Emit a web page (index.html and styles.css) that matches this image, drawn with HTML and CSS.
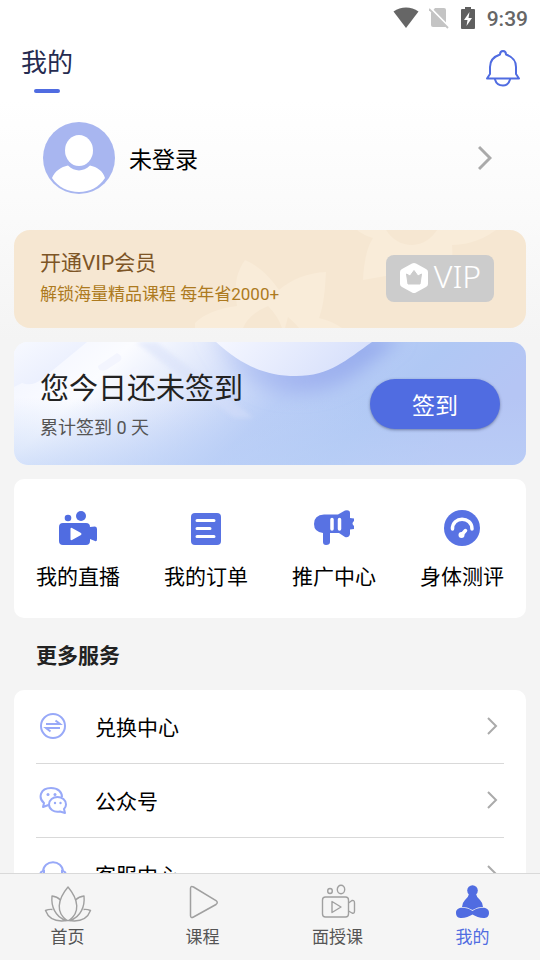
FILE: index.html
```html
<!DOCTYPE html>
<html lang="zh-CN">
<head>
<meta charset="utf-8">
<meta name="viewport" content="width=device-width, initial-scale=1">
<title>我的</title>
<link rel="stylesheet" href="styles.css">
</head>
<body>
<main class="screen">
  <div class="status">
    <svg width="26" height="22" viewBox="0 0 26 22" aria-hidden="true"><path d="M0.500 4.500C8-1 18-1 25.500 4.500L13 21Z" fill="#666"/></svg>
    <svg width="20" height="22" viewBox="0 0 20 22" aria-hidden="true"><path d="M6 1H15Q17 1 17 3V19Q17 20 16 20H4Q2 20 2 18V6Z" fill="#c4c4c4"/><path d="M1 .5L20 20" stroke="#fff" stroke-width="2"/><path d="M0 2L19 21" stroke="#c4c4c4" stroke-width="1.800"/></svg>
    <svg width="14" height="22" viewBox="0 0 14 22" aria-hidden="true"><path d="M4 0H10V2H13Q14 2 14 3V21Q14 22 13 22H1Q0 22 0 21V3Q0 2 1 2H4Z" fill="#5f5f5f"/><path d="M8.500 5L3 13H6.500L5.500 19L11 11H7.500Z" fill="#fff"/></svg>
    <span class="clock">9:39</span>
  </div>

  <header class="header">
    <h1 class="title">我的</h1>
    <button class="bell" aria-label="消息">
      <svg width="34" height="37" viewBox="0 0 34 37" fill="none" stroke="#506ce1" stroke-width="2" stroke-linejoin="round" stroke-linecap="round"><path d="M14 4.500C14 2 15.500 1 17 1C18.500 1 20 2 20 4.500C26 6.500 30 10.500 30 17V24L33 28.500H1L4 24V17C4 10.500 8 6.500 14 4.500Z"/><path d="M9 29.500C10 33 13 35.500 17 35.500C21 35.500 23 33 24 29.500"/></svg>
    </button>
  </header>

  <a class="profile" href="#login">
    <svg width="72" height="72" viewBox="0 0 72 72" aria-hidden="true"><circle cx="36" cy="36" r="36" fill="#a8b6f0"/><path d="M9 56C12 49 18 45 25 43.500C32 50 40 50 47 43.500C54 45 60 49 62 56C56 65 47 70 36 70C25 70 15 65 9 56Z" fill="#fff"/><ellipse cx="36" cy="28.500" rx="14" ry="15.500" fill="#fff"/></svg>
    <span class="name">未登录</span>
    <svg width="14" height="26" viewBox="0 0 14 26" fill="none" stroke="#aaa" stroke-width="3" aria-hidden="true"><path d="M1 2L12 13L1 24"/></svg>
  </a>

  <a class="card vip" href="#vip">
    <svg class="art" viewBox="0 0 512 98" preserveAspectRatio="xMidYMid slice" aria-hidden="true">
      <g fill="#f9ecd9"><path d="M181 93C190 84 205 78 223 76C220 55 222 43 231 30C245 36 256 47 265 60C278 49 293 43 312 42C311 59 310 75 305 88Q318 91 328 98H181Z"/><path d="M343 0H482C466 12 449 15 438 15Q440 34 431 56L372 46L349 50C350 31 353 17 359 8Q349 5 343 0Z"/></g>
      <path d="M229 98Q235 84 254 76Q264 86 268 98Z M271 98L274 87Q281 93 285 98Z M372 0Q382 15 398 15Q414 14 423 0Z" fill="#f6e7d2"/>
    </svg>
    <span class="copy">
      <strong class="vip-title">开通VIP会员</strong>
      <span class="vip-sub">解锁海量精品课程 每年省2000+</span>
    </span>
    <span class="badge">
      <svg width="30" height="32" viewBox="0 0 30 32" aria-hidden="true"><path d="M13 1.500Q15 .5 17 1.500L27 7Q29 8 29 10V22Q29 24 27 25L17 30.500Q15 31.500 13 30.500L3 25Q1 24 1 22V10Q1 8 3 7Z" fill="#fff"/><path d="M7.500 12L11 14L15 8.500L19 14L22.500 12L21 22H9Z" fill="#ccc" stroke="#ccc" stroke-linejoin="round"/></svg>
      <span>VIP</span>
    </span>
  </a>

  <section class="card check">
    <svg class="art" viewBox="0 0 512 123" preserveAspectRatio="xMidYMid slice" aria-hidden="true">
      <defs>
        <linearGradient id="base" x1="0" y1="0" x2="1" y2=".25"><stop offset="0" stop-color="#f1f4ff"/><stop offset=".22" stop-color="#fbfcff"/><stop offset=".4" stop-color="#dfe7fb"/><stop offset=".6" stop-color="#b9cdf6"/><stop offset=".8" stop-color="#b0c8f4"/><stop offset="1" stop-color="#b5c5f4"/></linearGradient>
        <linearGradient id="low" x1="0" y1="0" x2="0" y2="1"><stop offset=".45" stop-color="#bcd1f7" stop-opacity="0"/><stop offset="1" stop-color="#bcd1f7" stop-opacity=".6"/></linearGradient>
        <linearGradient id="blob" x1="0" y1="0" x2="1" y2="1"><stop offset="0" stop-color="#f7f9ff"/><stop offset="1" stop-color="#e4eafd"/></linearGradient>
        <linearGradient id="disc" x1="0" y1="0" x2="1" y2=".2"><stop offset="0" stop-color="#f5f7ff"/><stop offset="1" stop-color="#d7e0fb"/></linearGradient>
        <linearGradient id="fade" x1="0" y1="0" x2="1" y2="0"><stop offset="0" stop-color="#9fb2ef" stop-opacity=".1"/><stop offset=".5" stop-color="#a3b5f0"/><stop offset="1" stop-color="#92a9ec"/></linearGradient>
        <filter id="soft" x="-30%" y="-50%" width="160%" height="200%"><feGaussianBlur stdDeviation="9"/></filter>
        <filter id="edge"><feGaussianBlur stdDeviation="2"/></filter>
      </defs>
      <path d="M0 0H512V123H0Z" fill="url(#base)"/>
      <path d="M0 0H512V123H0Z" fill="url(#low)"/>
      <path d="M190-12C215 35 245 52 285 51C330 50 350 25 388-5Z" fill="url(#fade)" filter="url(#soft)"/>
      <path d="M122 0H142L240 76H220Z" fill="#d6dff9" opacity=".5" filter="url(#edge)"/>
      <path d="M84 24L103 11Q110 14 106 19L92 28Q84 30 84 24Z M104 40L119 25Q128 25 122 34L107 46Z" fill="#f3f5fe"/>
      <path d="M0 0H73L28 37Q18 45 8 41L0 45Z" fill="url(#blob)"/>
      <path d="M202 0C226 22 250 34 282 34C316 34 332 18 358 0Z" fill="url(#disc)"/>
    </svg>
    <div class="copy">
      <h2 class="check-title">您今日还未签到</h2>
      <p class="check-sub">累计签到 0 天</p>
    </div>
    <button class="check-btn">签到</button>
  </section>

  <nav class="card shortcuts" aria-label="快捷入口">
    <a href="#live"><svg width="40" height="40" viewBox="0 0 40 40" fill="#506ce1" aria-hidden="true"><circle cx="10" cy="10" r="3.300"/><circle cx="23" cy="8" r="5"/><path fill-rule="evenodd" d="M5 15H28Q32 15 32 19L37 18.500Q39 18.500 39 21V31Q39 34 37 33L32 31V33Q32 37 28 37H5Q1 37 1 33V19Q1 15 5 15ZM12.500 20.500V31.500Q13 32.500 14 32L23 27Q24 26 23 25L14 20Q13 19.500 12.500 20.500Z"/></svg>我的直播</a>
    <a href="#orders"><svg width="40" height="40" viewBox="0 0 40 40" aria-hidden="true"><rect x="5" y="5" width="30" height="32" rx="4" fill="#5872e3"/><path d="M11 12.500H28M11 20.500H24M11 28.500H28" stroke="#fff" stroke-width="3" stroke-linecap="round"/></svg>我的订单</a>
    <a href="#promo"><svg width="40" height="40" viewBox="0 0 40 40" fill="#5872e3" aria-hidden="true"><path d="M10 6.500H24L31 2.500Q36 1.500 36 5V10L40 10.500V13Q37 15.500 40 18V21L36 21.500V26Q35 30 31 29L25 25H16V34Q16 37 12 37Q9 37 9 34V25Q0 24 0 16Q0 7 10 6.500Z"/><path d="M18 11.500V21M25.500 11.500V21" stroke="#fff" stroke-width="3.500" stroke-linecap="round"/></svg>推广中心</a>
    <a href="#body"><svg width="40" height="40" viewBox="0 0 40 40" aria-hidden="true"><circle cx="20" cy="20" r="18" fill="#5872e3"/><path d="M10.500 21C10 8 30 8 30 21" fill="none" stroke="#fff" stroke-width="3.500" stroke-linecap="round"/><path d="M19.500 27L23.500 22.500" stroke="#fff" stroke-width="3.500" stroke-linecap="round"/><circle cx="19.500" cy="27" r="3" fill="#fff"/></svg>身体测评</a>
  </nav>

  <h2 class="section-title">更多服务</h2>

  <ul class="card list">
    <li><a href="#exchange"><svg width="28" height="28" viewBox="0 0 28 28" fill="none" stroke="#98a9f8" stroke-width="2" aria-hidden="true"><circle cx="14" cy="14" r="12"/><path d="M7 12H21L16.500 8.500M21 16H7L11.500 19.500"/></svg><span>兑换中心</span><svg width="12" height="18" viewBox="0 0 12 18" fill="none" stroke="#aaa" stroke-width="2" aria-hidden="true"><path d="M2 1L10 9L2 17"/></svg></a></li>
    <li><a href="#official"><svg width="28" height="28" viewBox="0 0 28 28" fill="none" stroke="#98a9f8" stroke-width="2" stroke-linejoin="round" aria-hidden="true"><path d="M9.500 19L4 21L5 17C-1 12 1 2 12 2C19 2 23 6 23 11"/><path d="M25 23L26 27L21 25.500C15 27 10 23 10 18.500C10 14 14 11 18.500 11C23 11 27 14 27 18.500Q27 21 25 23Z"/><g fill="#98a9f8" stroke="none"><circle cx="9" cy="8.500" r="1.500"/><circle cx="16" cy="8.500" r="1.500"/><circle cx="16" cy="17" r="1.200"/><circle cx="21.500" cy="17" r="1.200"/></g></svg><span>公众号</span><svg width="12" height="18" viewBox="0 0 12 18" fill="none" stroke="#aaa" stroke-width="2" aria-hidden="true"><path d="M2 1L10 9L2 17"/></svg></a></li>
    <li><a href="#support"><svg width="28" height="28" viewBox="0 0 28 28" fill="none" stroke="#98a9f8" stroke-width="2" aria-hidden="true"><path d="M4 12C4 -1 24 -1 24 12M5 11Q1 11 1 16Q1 21 5 21ZM23 11Q27 11 27 16Q27 21 23 21ZM23 21Q21 26 15 26"/></svg><span>客服中心</span><svg width="12" height="18" viewBox="0 0 12 18" fill="none" stroke="#aaa" stroke-width="2" aria-hidden="true"><path d="M2 1L10 9L2 17"/></svg></a></li>
  </ul>
</main>

<nav class="tabs" aria-label="主导航">
  <a href="#home"><svg width="48" height="38" viewBox="0 0 48 38" fill="none" stroke="#a0a0a0" stroke-width="1.400" stroke-linejoin="round" aria-hidden="true"><path d="M24 3C13 16 12 29 23 36.500H25C36 29 35 16 24 3Z"/><path d="M16.500 16Q13 12.500 8 12C7 22 11 33 22 36.500M31.500 16Q35 12.500 40 12C41 22 37 33 26 36.500"/><path d="M8.500 25.500Q5 25 1.500 26.500C5 36 13 38 23 36.500M39.500 25.500Q43 25 46.500 26.500C43 36 35 38 25 36.500"/></svg>首页</a>
  <a href="#course"><svg width="48" height="38" viewBox="0 0 48 38" fill="none" stroke="#a0a0a0" stroke-width="1.500" aria-hidden="true"><path d="M11.500 4.500Q11.500 1.500 14.500 3L37 16.500Q39.500 18.500 37 20.500L14.500 33Q11.500 34.500 11.500 31.500Z"/></svg>课程</a>
  <a href="#class"><svg width="48" height="38" viewBox="0 0 48 38" fill="none" stroke="#a0a0a0" stroke-width="1.400" stroke-linejoin="round" aria-hidden="true"><ellipse cx="16" cy="7" rx="2.300" ry="2.500"/><ellipse cx="27" cy="5.500" rx="3.700" ry="4.200"/><rect x="8.500" y="13" width="26" height="20" rx="3"/><path d="M18 17.500V28.500L27 23ZM34.500 19L38 16.500Q40.500 16 40.500 19V27Q40.500 30 38 29L34.500 27"/></svg>面授课</a>
  <a class="active" href="#me" aria-current="page"><svg width="48" height="38" viewBox="0 0 48 38" fill="#506ce1" aria-hidden="true"><circle cx="23.500" cy="6.500" r="5.300"/><path d="M20 10H27Q27.500 13 31 16Q34 19 34 23L29 23.500L23.500 26L18 23.500L13 23Q13 19 16 16Q19.500 13 20 10Z"/><path d="M23.500 27C17 23 7 22 7 29C7 37 18 34 23.500 30.500C29 34 40 37 40 29C40 22 30 23 23.500 27Z"/></svg>我的</a>
</nav>
</body>
</html>
```
FILE: styles.css
```css
* {
  box-sizing: border-box;
  margin: 0;
  padding: 0;
}

body {
  display: flex;
  flex-direction: column;
  height: 100vh;
  background: #f4f4f4;
  color: #111;
  font-family: Roboto, "Noto Sans CJK SC", sans-serif;
}

a {
  color: inherit;
  text-decoration: none;
}

button {
  border: 0;
  background: none;
  font: inherit;
}

svg {
  display: block;
  flex-shrink: 0;
}

.screen {
  flex: 1;
  min-height: 0;
  overflow: hidden;
  padding: 0 14px;
  background: linear-gradient(#fff 100px, #fafafa 220px, #f4f4f4 340px);
}

.status {
  display: flex;
  align-items: center;
  justify-content: flex-end;
  gap: 10px;
  height: 36px;
  padding-bottom: 1px;
  margin-right: -2px;
}

.status svg + svg + svg {
  margin-left: 2px;
}

.clock {
  padding: 3px 0 0 2px;
  color: #666;
  font-size: 21px;
  font-weight: 500;
}

.header {
  display: flex;
  justify-content: space-between;
  align-items: flex-start;
  height: 58px;
  padding: 8px 6px 0 7px;
}

.title {
  display: flex;
  flex-direction: column;
  align-items: center;
  gap: 7px;
  color: #252b50;
  font-size: 26px;
  font-weight: 400;
  line-height: 38px;
}

.title::after {
  content: "";
  width: 26px;
  height: 4px;
  border-radius: 2px;
  background: #506ce1;
}

.bell {
  padding-top: 6px;
}

.profile {
  display: flex;
  align-items: center;
  height: 128px;
  padding: 0 34px 0 29px;
}

.name {
  flex: 1;
  padding-left: 14px;
  color: #000;
  font-size: 23px;
}

.card {
  position: relative;
  overflow: hidden;
  border-radius: 10px;
  background: #fff;
}

.art {
  position: absolute;
  inset: 0;
  width: 100%;
  height: 100%;
}

.copy {
  position: relative;
  display: flex;
  flex-direction: column;
}

.vip {
  display: flex;
  align-items: center;
  justify-content: space-between;
  height: 98px;
  margin-top: 8px;
  padding: 0 32px 2px 26px;
  border-radius: 16px;
  background: #f6e7d2;
}

.vip-title {
  color: #7d5526;
  font-size: 21px;
  font-weight: 400;
  line-height: 32px;
}

.vip-sub {
  color: #ad7a20;
  font-size: 17px;
  line-height: 30px;
}

.badge {
  position: relative;
  display: flex;
  align-items: center;
  justify-content: center;
  gap: 5px;
  width: 108px;
  height: 47px;
  border-radius: 8px;
  background: #ccc;
  color: #fff;
  font-family: "Noto Sans", sans-serif;
  font-size: 32px;
  font-weight: 300;
  line-height: 42px;
}

.badge span {
  padding-bottom: 4px;
}

.check {
  display: flex;
  align-items: center;
  justify-content: space-between;
  height: 123px;
  margin-top: 14px;
  padding: 0 26px;
  border-radius: 14px;
}

.check .copy {
  padding-top: 6px;
}

.check-title {
  color: #222;
  font-size: 29px;
  font-weight: 400;
  line-height: 42px;
}

.check-sub {
  color: #555;
  font-size: 18px;
  line-height: 36px;
}

.check-btn {
  position: relative;
  width: 130px;
  height: 50px;
  border-radius: 25px;
  background: #506ce1;
  box-shadow: 0 1px 3px rgba(40, 50, 90, 0.5);
  color: #fff;
  font-size: 23px;
}

.shortcuts {
  display: grid;
  grid-template-columns: repeat(4, 1fr);
  height: 139px;
  margin-top: 14px;
  padding-top: 29px;
}

.shortcuts a {
  display: flex;
  flex-direction: column;
  align-items: center;
  gap: 12px;
  color: #000;
  font-size: 21px;
  line-height: 34px;
}

.section-title {
  padding: 4px 0 0 22px;
  color: #222;
  font-size: 21px;
  font-weight: 700;
  line-height: 68px;
}

.list {
  padding: 0 22px;
  list-style: none;
}

.list a {
  display: flex;
  align-items: center;
  height: 74px;
  padding: 0 6px 1px 3px;
  border-bottom: 1px solid #d9d9d9;
  color: #000;
  font-size: 21px;
}

.list span {
  flex: 1;
  padding-left: 28px;
}

.tabs {
  display: grid;
  grid-template-columns: repeat(4, 1fr);
  height: 87px;
  border-top: 1px solid #d9d9d9;
  background: #f5f5f5;
  color: #555;
  font-size: 17px;
}

.tabs a {
  display: flex;
  flex-direction: column;
  align-items: center;
  gap: 2px;
  padding-top: 10px;
  line-height: 26px;
}

.tabs .active {
  color: #506ce1;
}
```
